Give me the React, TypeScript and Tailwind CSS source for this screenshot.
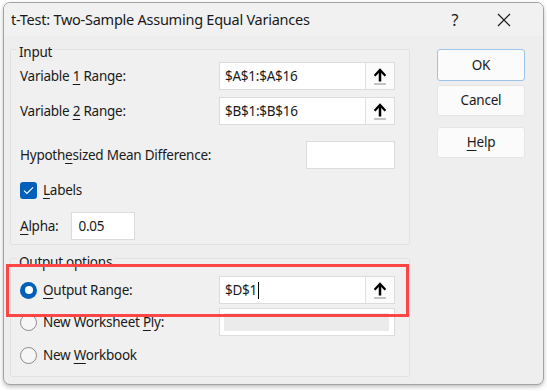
import React from "react";

const font = { fontFamily: '"Noto Sans", "Open Sans", sans-serif' };

function U({ children }: { children: React.ReactNode }) {
  return <span className="underline underline-offset-[3px] decoration-1">{children}</span>;
}

function PickButton() {
  return (
    <div className="w-[29px] h-full flex items-center justify-center bg-[#fbfbfb] border-l border-[#e0e0e0]">
      <svg width="14" height="19" viewBox="0 0 14 19">
        <path d="M7 3.5 V14.5" stroke="#000" strokeWidth="2.5" />
        <path d="M1.6 8.8 L7 3 L12.4 8.8" stroke="#000" strokeWidth="2.3" fill="none" />
        <path d="M1 17 H13" stroke="#8a8a8a" strokeWidth="1" />
      </svg>
    </div>
  );
}

function RangeField({ value, cursor }: { value: string; cursor?: boolean }) {
  return (
    <div className="w-[176px] h-[28px] flex bg-white border border-[#dcdcdc]">
      <div className="flex-1 flex items-center pl-[5px] text-[#1a1a1a]">
        {value}
        {cursor && <span className="w-px h-[17px] bg-black ml-px" />}
      </div>
      <PickButton />
    </div>
  );
}

function Radio({ checked }: { checked?: boolean }) {
  return checked ? (
    <div className="w-[17px] h-[17px] rounded-full bg-[#005fb8] flex items-center justify-center">
      <div className="w-[8px] h-[8px] rounded-full bg-white" />
    </div>
  ) : (
    <div className="w-[17px] h-[17px] rounded-full border border-[#8a8a8a] bg-[#f6f6f6]" />
  );
}

function Button({ children, primary }: { children: React.ReactNode; primary?: boolean }) {
  return (
    <div
      className={
        "w-[88px] flex items-center justify-center rounded-[3px] bg-[#fbfbfb] text-[13.5px] tracking-[-0.2px] text-[#1a1a1a] border " +
        (primary ? "border-[#9cc3ea]" : "border-[#e6e6e6]")
      }
    >
      {children}
    </div>
  );
}

export default function App() {
  return (
    <div className="relative w-[547px] h-[391px] bg-white overflow-hidden" style={font}>
      <div className="pl-[3px] pt-[2px]">
        {/* Dialog window */}
        <div className="w-[541px] h-[383px] rounded-[7px] border border-[#a3a3a3] bg-[#eeeeee] shadow-[0_2px_4px_rgba(0,0,0,0.25)] overflow-hidden">
          {/* Title bar */}
          <div className="h-[33px] flex items-center pl-[7px] bg-[#f1f1f1]">
            <span className="text-[14.5px] tracking-[-0.25px] text-[#1a1a1a] mt-[1px]">t-Test: Two-Sample Assuming Equal Variances</span>
            <span className="ml-auto w-[40px] text-center text-[16px] text-[#1a1a1a]">?</span>
            <div className="w-[58px] mr-[10px] flex justify-center">
              <svg width="14" height="14" viewBox="0 0 14 14">
                <path d="M1 1 L13 13 M13 1 L1 13" stroke="#1a1a1a" strokeWidth="1.2" />
              </svg>
            </div>
          </div>

          <div className="flex pl-[6px] pt-[13px] text-[13.5px] tracking-[-0.25px] text-[#1a1a1a]">
            {/* Left column */}
            <div className="w-[400px] flex flex-col">
              {/* Input group */}
              <div className="border border-[#e2e2e2] bg-[#f0f0f0] rounded-[2px] pl-[9px] pr-[14px] pb-[4px]">
                <div className="-mt-[7px] h-[18px] leading-[18px] w-fit -ml-[3px] px-[2px] bg-[#eeeeee]">Input</div>
                <div className="mt-[1px] flex items-center justify-between">
                  <span>
                    Variable <U>1</U> Range:
                  </span>
                  <RangeField value="$A$1:$A$16" />
                </div>
                <div className="mt-[7px] flex items-center justify-between">
                  <span>
                    Variable <U>2</U> Range:
                  </span>
                  <RangeField value="$B$1:$B$16" />
                </div>
                <div className="mt-[16px] flex items-center justify-between">
                  <span>
                    Hypoth<U>e</U>sized Mean Difference:
                  </span>
                  <div className="w-[89px] h-[28px] bg-white border border-[#dcdcdc]" />
                </div>
                <div className="mt-[13px] h-[16px] flex items-center">
                  <div className="w-[17px] h-[17px] rounded-[3px] bg-[#005fb8] flex items-center justify-center">
                    <svg width="11" height="9" viewBox="0 0 11 9">
                      <path d="M1 4.6 L4 7.4 L10 1.4" stroke="#fff" strokeWidth="1.2" fill="none" />
                    </svg>
                  </div>
                  <span className="ml-[6px]">
                    <U>L</U>abels
                  </span>
                </div>
                <div className="mt-[14px] flex items-center">
                  <span>
                    <U>A</U>lpha:
                  </span>
                  <div className="ml-[13px] w-[64px] h-[28px] bg-white border border-[#dcdcdc] flex items-center pl-[6px]">0.05</div>
                </div>
              </div>

              {/* Output group */}
              <div className="mt-[13px] border border-[#e2e2e2] bg-[#f0f0f0] rounded-[2px] pl-[9px] pr-[14px] pb-[7px]">
                <div className="-mt-[6px] h-[18px] leading-[18px] w-fit -ml-[3px] px-[2px] bg-[#eeeeee]">Output options</div>
                <div className="mt-[5px] flex items-center justify-between">
                  <div className="flex items-center">
                    <Radio checked />
                    <span className="ml-[6px]">
                      <U>O</U>utput Range:
                    </span>
                  </div>
                  <RangeField value="$D$1" cursor />
                </div>
                <div className="mt-[4px] flex items-center justify-between">
                  <div className="flex items-center">
                    <Radio />
                    <span className="ml-[6px]">
                      New Worksheet <U>P</U>ly:
                    </span>
                  </div>
                  <div className="w-[176px] h-[28px] bg-white border border-[#dcdcdc] p-[4px] pr-[5px]">
                    <div className="w-full h-full bg-[#ebebeb]" />
                  </div>
                </div>
                <div className="mt-[5px] h-[28px] flex items-center">
                  <Radio />
                  <span className="ml-[6px]">
                    New <U>W</U>orkbook
                  </span>
                </div>
              </div>
            </div>

            {/* Buttons */}
            <div className="ml-[27px] flex flex-col">
              <div className="h-[32px] flex">
                <Button primary>OK</Button>
              </div>
              <div className="mt-[4px] h-[31px] flex">
                <Button>Cancel</Button>
              </div>
              <div className="mt-[11px] h-[31px] flex">
                <Button>
                  <span>
                    <U>H</U>elp
                  </span>
                </Button>
              </div>
            </div>
          </div>
        </div>
      </div>

      {/* Red highlight annotation */}
      <div className="absolute left-[6px] top-[264px] w-[403px] h-[53px] border-[3px] border-[#ff4646]" />
    </div>
  );
}
